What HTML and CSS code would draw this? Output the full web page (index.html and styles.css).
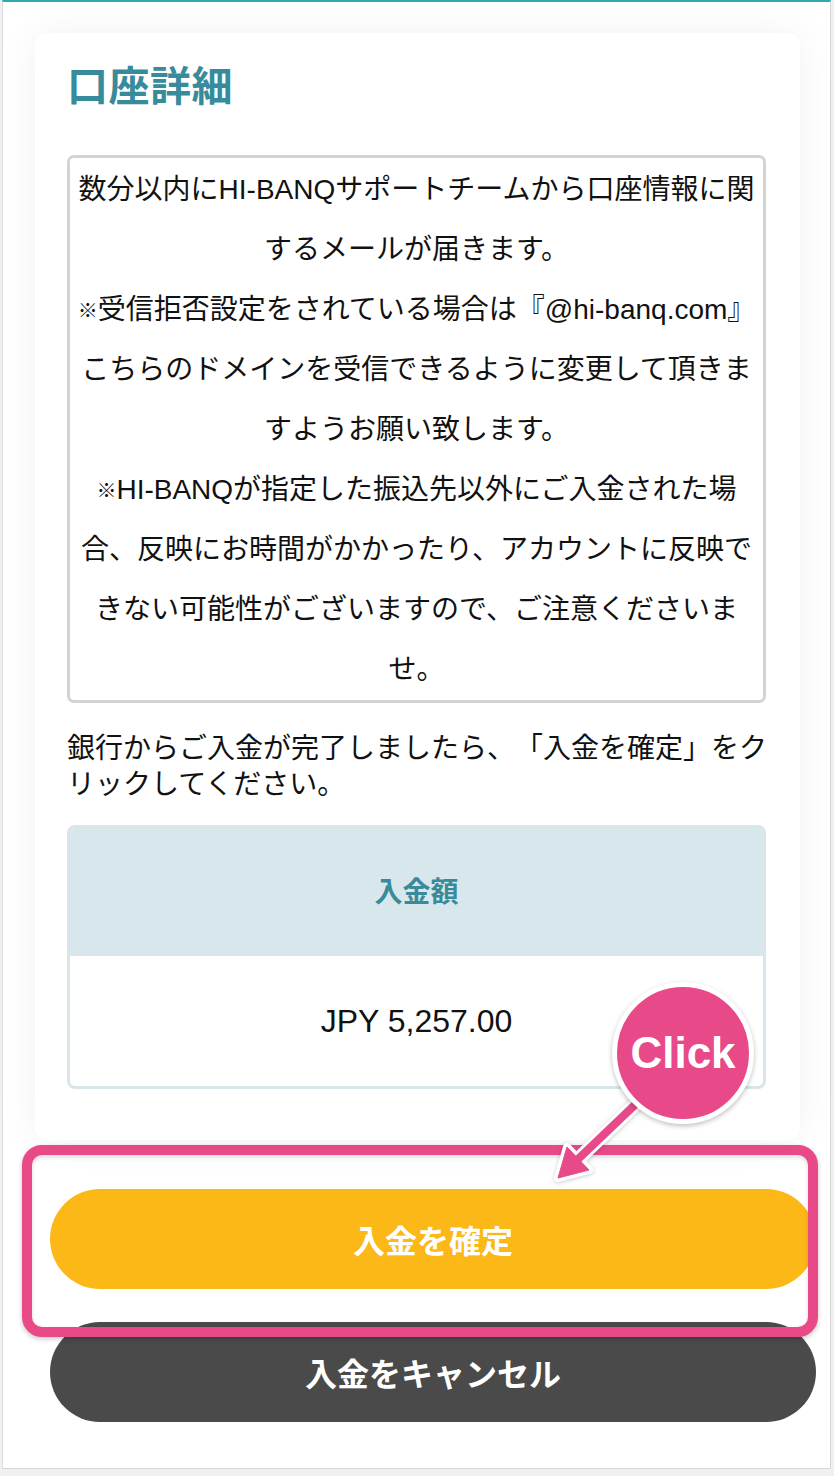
FILE: index.html
```html
<!DOCTYPE html>
<html lang="ja">
<head>
<meta charset="utf-8">
<title>口座詳細</title>
<link rel="stylesheet" href="styles.css">
</head>
<body>
<div class="screen">
  <section class="card">
    <h1 class="title">口座詳細</h1>
    <div class="notice">
      <p>数分以内にHI-BANQサポートチームから口座情報に関するメールが届きます。</p>
      <p><span class="mark">※</span>受信拒否設定をされている場合は『@hi-banq.com』こちらのドメインを受信できるように変更して頂きますようお願い致します。</p>
      <p><span class="mark">※</span>HI-BANQが指定した振込先以外にご入金された場合、反映にお時間がかかったり、アカウントに反映できない可能性がございますので、ご注意くださいませ。</p>
    </div>
    <p class="lead">銀行からご入金が完了しましたら、「入金を確定」をクリックしてください。</p>
    <div class="amount">
      <div class="amount-head">入金額</div>
      <div class="amount-body">JPY 5,257.00</div>
    </div>
  </section>
  <div class="actions">
    <button class="btn btn-confirm" type="button">入金を確定</button>
    <button class="btn btn-cancel" type="button">入金をキャンセル</button>
  </div>
  <div class="highlight"></div>
  <svg class="arrow" width="120" height="110" viewBox="0 0 120 110">
    <line x1="100" y1="20" x2="34" y2="83" stroke="#fff" stroke-width="14" stroke-linecap="round"/>
    <polygon points="18,98 27,67 49,90" fill="#fff" stroke="#fff" stroke-width="8" stroke-linejoin="round"/>
    <line x1="100" y1="20" x2="34" y2="83" stroke="#e84a89" stroke-width="8"/>
    <polygon points="18,98 27,67 49,90" fill="#e84a89" stroke="#e84a89" stroke-width="1" stroke-linejoin="round"/>
  </svg>
  <div class="badge">Click</div>
</div>
</body>
</html>
```
FILE: styles.css
```css
html, body {
  margin: 0;
  padding: 0;
}
body {
  background: #f0f0f0;
  font-family: "Liberation Sans", "Noto Sans CJK JP", sans-serif;
  color: #111;
  width: 834px;
  height: 1476px;
  overflow: hidden;
}
.screen {
  position: relative;
  margin-left: 2px;
  width: 829px;
  height: 1469px;
  box-sizing: border-box;
  background: #fff;
  border-top: 2px solid #2ea9b2;
  border-left: 1px solid #dcdcdc;
  border-right: 1px solid #d6d6d6;
  border-bottom: 1px solid #d6d6d6;
}
.card {
  margin: 31px 0 0 32px;
  width: 765px;
  box-sizing: border-box;
  padding: 30px 32px 51px 32px;
  background: #fff;
  border-radius: 12px;
  box-shadow: 0 0 40px rgba(0, 0, 0, 0.06);
}
.title {
  margin: 0;
  font-size: 41px;
  line-height: 48px;
  font-weight: 700;
  color: #388b9b;
  letter-spacing: 0.5px;
}
.notice {
  margin: 44px 2px 0 0;
  border: 3px solid #d3d3d3;
  border-radius: 7px;
  padding: 2px 0 0;
  text-align: center;
  font-size: 28px;
  line-height: 60px;
  text-spacing-trim: space-all;
}
.notice p {
  margin: 0;
}
.mark {
  display: inline-block;
  font-size: 20px;
  line-height: 20px;
  width: 20px;
  vertical-align: 1px;
}
.lead {
  margin: 28px 0 0;
  font-size: 28px;
  line-height: 36px;
  text-spacing-trim: space-all;
}
.amount {
  margin: 22px 2px 0 0;
  border: 3px solid #d8e6eb;
  border-radius: 8px;
  overflow: hidden;
}
.amount-head {
  height: 128px;
  background: #d8e7ec;
  display: flex;
  align-items: center;
  justify-content: center;
  padding-bottom: 4px;
  box-sizing: border-box;
  font-size: 28px;
  font-weight: 700;
  color: #3a8a99;
}
.amount-body {
  height: 130px;
  display: flex;
  align-items: center;
  justify-content: center;
  font-size: 32px;
  color: #111;
}
.actions {
  margin-top: 49px;
  padding-left: 47px;
  display: flex;
  flex-direction: column;
  gap: 33px;
}
.btn {
  width: 766px;
  height: 100px;
  border: none;
  border-radius: 50px;
  font-family: inherit;
  font-size: 32px;
  font-weight: 700;
  color: #fff;
  padding: 0;
}
.btn-confirm {
  background: #fbb817;
}
.btn-cancel {
  background: #4a4a4a;
}
.highlight {
  position: absolute;
  left: 19px;
  top: 1143px;
  width: 796px;
  height: 192px;
  box-sizing: border-box;
  border: 10px solid #e84a89;
  border-radius: 20px;
  box-shadow: 0 2px 5px rgba(0, 0, 0, 0.22), inset 0 2px 4px rgba(0, 0, 0, 0.15);
}
.arrow {
  position: absolute;
  left: 537px;
  top: 1078px;
  filter: drop-shadow(0 1px 2px rgba(0, 0, 0, 0.2));
}
.badge {
  position: absolute;
  left: 609px;
  top: 980px;
  width: 142px;
  height: 142px;
  box-sizing: border-box;
  border-radius: 50%;
  border: 5px solid #fff;
  background: #e84a89;
  color: #fff;
  font-family: "Liberation Sans", sans-serif;
  font-weight: 700;
  font-size: 44px;
  display: flex;
  align-items: center;
  justify-content: center;
  box-shadow: 0 2px 5px rgba(0, 0, 0, 0.25);
}
```
